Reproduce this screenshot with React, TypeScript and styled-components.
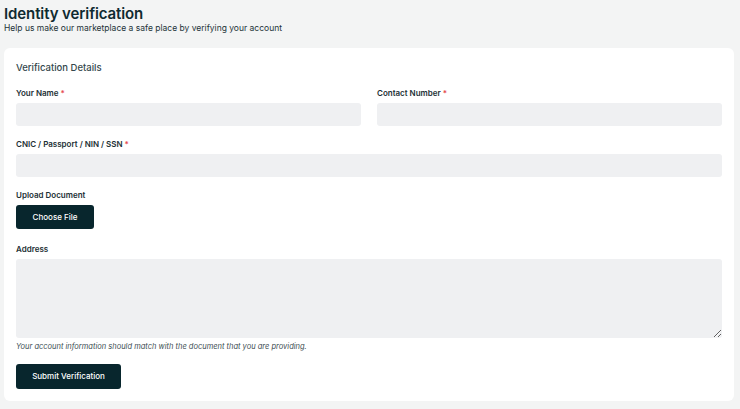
import React from "react";
import styled, { createGlobalStyle } from "styled-components";

const GlobalStyle = createGlobalStyle`
  * {
    box-sizing: border-box;
  }

  body {
    margin: 0;
    background: #f3f4f4;
    font-family: Inter, "Noto Sans", sans-serif;
    color: #0f2a30;
  }
`;

const Page = styled.div`
  padding: 4px 6px 8px 4px;
  min-height: 100vh;
`;

const PageHeader = styled.header`
  margin-bottom: 14px;
`;

const Title = styled.h1`
  margin: 0;
  font-size: 15px;
  font-weight: 600;
  letter-spacing: -0.1px;
  line-height: 19px;
  color: #0f2a30;
`;

const Subtitle = styled.p`
  margin: 0;
  font-size: 8.5px;
  line-height: 11px;
  color: #1d3338;
`;

const Card = styled.section`
  background: #ffffff;
  border-radius: 6px;
  padding: 13px 12px 12px;
`;

const CardTitle = styled.h2`
  margin: 0 0 13px;
  font-size: 9.5px;
  font-weight: 500;
  line-height: 14px;
  color: #34474c;
`;

const Row = styled.div`
  display: grid;
  grid-template-columns: 1fr 1fr;
  gap: 16px;
`;

const Field = styled.div<{ $gap?: number }>`
  display: flex;
  flex-direction: column;
  align-items: stretch;
  margin-bottom: ${(p) => p.$gap ?? 13}px;
`;

const Label = styled.label`
  font-size: 8px;
  font-weight: 600;
  line-height: 11px;
  color: #1c3035;
  margin-bottom: 4px;
`;

const Required = styled.span`
  color: #e5484d;
  margin-left: 2px;
`;

const Input = styled.input`
  height: 23px;
  border: none;
  border-radius: 3px;
  background: #eff0f2;
  padding: 0 8px;
  font-family: inherit;
  font-size: 9px;
  outline: none;
`;

const TextArea = styled.textarea`
  height: 79px;
  border: none;
  border-radius: 3px;
  background: #eff0f2;
  padding: 6px 8px;
  font-family: inherit;
  font-size: 9px;
  outline: none;
  resize: vertical;
  display: block;
`;

const Hint = styled.p`
  margin: 4px 0 11px;
  font-size: 7.5px;
  font-style: italic;
  line-height: 10px;
  color: #3b4c51;
`;

const DarkButton = styled.button<{ $width: number; $height?: number }>`
  width: ${(p) => p.$width}px;
  height: ${(p) => p.$height ?? 24}px;
  border: none;
  border-radius: 3px;
  background: #08262d;
  color: #ffffff;
  font-family: inherit;
  font-size: 8px;
  font-weight: 500;
  cursor: pointer;
`;

const App: React.FC = () => {
  return (
    <>
      <GlobalStyle />
      <Page>
        <PageHeader>
          <Title>Identity verification</Title>
          <Subtitle>
            Help us make our marketplace a safe place by verifying your account
          </Subtitle>
        </PageHeader>

        <Card>
          <CardTitle>Verification Details</CardTitle>

          <Row>
            <Field>
              <Label>
                Your Name<Required>*</Required>
              </Label>
              <Input type="text" />
            </Field>
            <Field>
              <Label>
                Contact Number<Required>*</Required>
              </Label>
              <Input type="text" />
            </Field>
          </Row>

          <Field>
            <Label>
              CNIC / Passport / NIN / SSN<Required>*</Required>
            </Label>
            <Input type="text" />
          </Field>

          <Field $gap={15}>
            <Label>Upload Document</Label>
            <DarkButton type="button" $width={78}>
              Choose File
            </DarkButton>
          </Field>

          <Field $gap={0}>
            <Label>Address</Label>
            <TextArea />
          </Field>
          <Hint>
            Your account information should match with the document that you
            are providing.
          </Hint>

          <DarkButton type="submit" $width={105} $height={25}>
            Submit Verification
          </DarkButton>
        </Card>
      </Page>
    </>
  );
};

export default App;
